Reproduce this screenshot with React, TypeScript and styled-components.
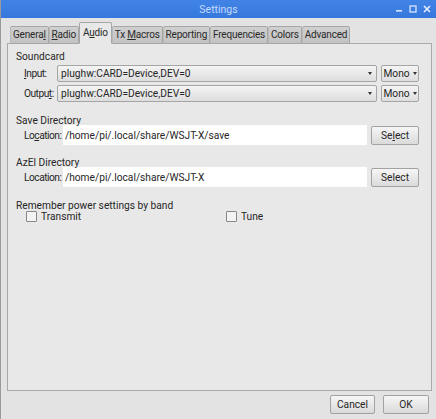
import styled, { createGlobalStyle } from 'styled-components';

const Global = createGlobalStyle`
  html, body {
    margin: 0;
    padding: 0;
    background: #e3e3e3;
  }
  body {
    font-family: Roboto, "Liberation Sans", sans-serif;
    font-size: 10.2px;
    color: #262626;
  }
`;

const Window = styled.div`
  width: 436px;
  height: 419px;
  display: flex;
  flex-direction: column;
  background: #e3e3e3;
  border-left: 1px solid #9a9a9a;
  box-sizing: border-box;
  overflow: hidden;
`;

const TitleBar = styled.div`
  height: 18px;
  flex: none;
  background: linear-gradient(#4284e6, #3677dc);
  position: relative;
  display: flex;
  align-items: center;
  justify-content: center;
`;

const Title = styled.span`
  color: #c4dbff;
  font-size: 10.5px;
`;

const WinButtons = styled.div`
  position: absolute;
  right: 5px;
  top: 0;
  height: 18px;
  display: flex;
  align-items: center;
  gap: 6px;
`;

const Body = styled.div`
  flex: 1;
  display: flex;
  flex-direction: column;
  padding: 4px 4px 4px 6px;
`;

const TabBar = styled.div`
  display: flex;
  align-items: flex-end;
  padding-left: 3px;
  height: 22px;
  position: relative;
  z-index: 1;
  margin-bottom: -1px;
`;

const Tab = styled.div<{ $active?: boolean }>`
  height: ${p => (p.$active ? '22px' : '18px')};
  line-height: ${p => (p.$active ? '20px' : '16px')};
  padding: 0 ${p => (p.$active ? '3px' : '2px')};
  box-sizing: border-box;
  border: 1px solid #a6a6a6;
  border-left-color: ${p => (p.$active ? '#a6a6a6' : '#b8b8b8')};
  border-bottom: ${p => (p.$active ? '1px solid #e8e8e8' : '1px solid #a6a6a6')};
  border-radius: 2px 2px 0 0;
  background: ${p =>
    p.$active ? '#e8e8e8' : 'linear-gradient(#d0d0d0, #c2c2c2)'};
  color: #2a2a2a;
  font-size: 10px;
  letter-spacing: -0.2px;
  white-space: pre;
`;

const Panel = styled.div`
  flex: 1;
  border: 1px solid #a9a9a9;
  background: #e8e8e8;
  padding: 7px 12px 0 8px;
  display: flex;
  flex-direction: column;
`;

const GroupLabel = styled.div<{ $top?: number }>`
  position: relative;
  z-index: 1;
  margin-top: ${p => p.$top ?? 0}px;
  height: 12px;
  line-height: 12px;
`;

const Row = styled.div<{ $top?: number }>`
  display: flex;
  align-items: center;
  margin-top: ${p => p.$top ?? 0}px;
  padding-left: 8px;
`;

const FieldLabel = styled.span<{ $w: number }>`
  width: ${p => p.$w}px;
  flex: none;
  white-space: nowrap;
  letter-spacing: -0.5px;
`;

const Combo = styled.div`
  flex: 1;
  height: 17px;
  box-sizing: border-box;
  border: 1px solid #a5a5a5;
  border-radius: 2px;
  background: linear-gradient(#f4f4f4, #dedede);
  display: flex;
  align-items: center;
  padding: 0 4px 0 3px;
  justify-content: space-between;
`;

const Caret = styled.span`
  width: 0;
  height: 0;
  border-left: 2px solid transparent;
  border-right: 2px solid transparent;
  border-top: 3px solid #333;
  margin-left: 3px;
`;

const Mono = styled.div`
  width: 38px;
  height: 17px;
  margin-left: 4px;
  flex: none;
  box-sizing: border-box;
  border: 1px solid #a5a5a5;
  border-radius: 2px;
  background: linear-gradient(#f4f4f4, #dedede);
  display: flex;
  align-items: center;
  justify-content: center;
`;

const PathInput = styled.div`
  flex: 1;
  height: 20px;
  background: #fff;
  display: flex;
  align-items: center;
  padding-left: 2px;
`;

const Button = styled.div<{ $w: number; $gap?: number }>`
  width: ${p => p.$w}px;
  height: 19px;
  margin-left: ${p => p.$gap ?? 0}px;
  flex: none;
  box-sizing: border-box;
  border: 1px solid #a2a2a2;
  border-radius: 2px;
  background: linear-gradient(#f6f6f6, #dadada);
  display: flex;
  align-items: center;
  justify-content: center;
`;

const CheckRow = styled.div`
  display: flex;
  margin-top: -2px;
  padding-left: 10px;
`;

const Check = styled.label<{ $w: number }>`
  width: ${p => p.$w}px;
  display: flex;
  align-items: center;
  gap: 4px;
  height: 13px;
`;

const Box = styled.span`
  width: 9px;
  height: 9px;
  border: 1px solid #888;
  border-radius: 1px;
  background: #f3f3f3;
`;

const Footer = styled.div`
  display: flex;
  justify-content: flex-end;
  gap: 8px;
  padding: 4px 3px 1px 0;
`;

const Key = styled.u`
  text-decoration-thickness: 1px;
`;

const tabs: [React.ReactNode, boolean?][] = [
  [<>Genera<Key>l</Key></>],
  [<><Key>R</Key>adio</>],
  [<>A<Key>u</Key>dio</>, true],
  [<>Tx <Key>M</Key>acros</>],
  [<>Reportin<Key>g</Key></>],
  [<>Frequencies</>],
  [<>Colors</>],
  [<>Advanced</>],
];

// minimise / maximise / close glyphs of the window manager
const WinIcons = () => (
  <WinButtons>
    <svg width="8" height="8" viewBox="0 0 8 8">
      <rect x="1" y="5" width="6" height="1.6" fill="#d6e6ff" />
    </svg>
    <svg width="8" height="8" viewBox="0 0 8 8">
      <rect x="1" y="1" width="6" height="6" fill="none" stroke="#d6e6ff" strokeWidth="1.3" />
    </svg>
    <svg width="8" height="8" viewBox="0 0 8 8">
      <path d="M1 1 L7 7 M7 1 L1 7" stroke="#e6f0ff" strokeWidth="1.6" />
    </svg>
  </WinButtons>
);

export default function App() {
  return (
    <>
      <Global />
      <Window>
        <TitleBar>
          <Title>Settings</Title>
          <WinIcons />
        </TitleBar>
        <Body>
          <TabBar>
            {tabs.map(([label, active], i) => (
              <Tab key={i} $active={active}>
                {label}
              </Tab>
            ))}
          </TabBar>
          <Panel>
            <GroupLabel>Soundcard</GroupLabel>
            <Row $top={2}>
              <FieldLabel $w={33}><Key>I</Key>nput:</FieldLabel>
              <Combo>
                plughw:CARD=Device,DEV=0
                <Caret />
              </Combo>
              <Mono>Mono<Caret /></Mono>
            </Row>
            <Row $top={3}>
              <FieldLabel $w={33}>Outpu<Key>t</Key>:</FieldLabel>
              <Combo>
                plughw:CARD=Device,DEV=0
                <Caret />
              </Combo>
              <Mono>Mono<Caret /></Mono>
            </Row>

            <GroupLabel $top={13}>Save Directory</GroupLabel>
            <Row $top={-2}>
              <FieldLabel $w={39}>Lo<Key>c</Key>ation:</FieldLabel>
              <PathInput>/home/pi/.local/share/WSJT-X/save</PathInput>
              <Button $w={48} $gap={4}>Se<Key>l</Key>ect</Button>
            </Row>

            <GroupLabel $top={12}>AzEl Directory</GroupLabel>
            <Row $top={-2}>
              <FieldLabel $w={39}>Location:</FieldLabel>
              <PathInput>/home/pi/.local/share/WSJT-X</PathInput>
              <Button $w={48} $gap={4}>Select</Button>
            </Row>

            <GroupLabel $top={13}>Remember power settings by band</GroupLabel>
            <CheckRow>
              <Check $w={200}><Box />Transmit</Check>
              <Check $w={60}><Box />Tune</Check>
            </CheckRow>
          </Panel>
          <Footer>
            <Button $w={45}>Cancel</Button>
            <Button $w={46}>OK</Button>
          </Footer>
        </Body>
      </Window>
    </>
  );
}
